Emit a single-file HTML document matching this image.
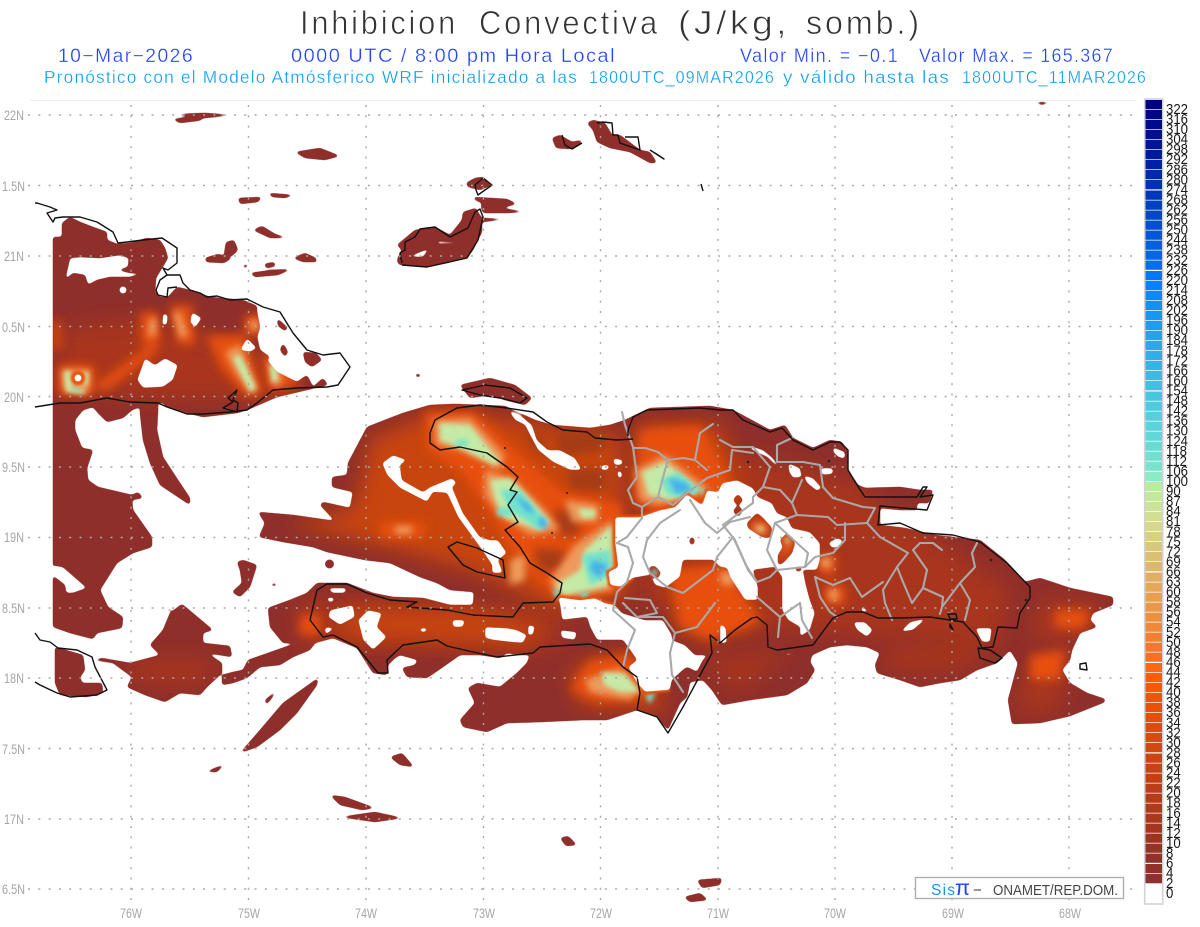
<!DOCTYPE html>
<html lang="es">
<head>
<meta charset="utf-8">
<title>Inhibicion Convectiva</title>
<style>
html,body{margin:0;padding:0;background:#fff;width:1200px;height:927px;overflow:hidden}
svg{display:block}
text{font-family:"Liberation Sans",sans-serif}
</style>
</head>
<body>
<svg width="1200" height="927" viewBox="0 0 1200 927" xmlns="http://www.w3.org/2000/svg">
<defs>
<filter id="goo" filterUnits="userSpaceOnUse" x="0" y="0" width="1200" height="927">
<feGaussianBlur stdDeviation="1.5"/>
<feComponentTransfer><feFuncA type="linear" slope="6" intercept="-2.1"/></feComponentTransfer>
</filter>
<mask id="land" maskUnits="userSpaceOnUse" x="0" y="0" width="1200" height="927"><g filter="url(#goo)"><path fill="#fff" fill-rule="evenodd" d="
M53,237L62,237 62,223 70,217 80,222 93,227 107,232 107,240 117,244 130,243 147,238 160,240 165,248 168,258 162,268 156,278 155,292 160,297 168,297 177,287 190,290 210,297 243,300 257,306 257,312 260,327 257,337 260,350 270,357 267,360 277,372 297,382 307,375 313,387 323,378 328,385 277,397 247,410 237,413 203,417 187,413 167,407 163,403 158,403 158,410 157,430 163,457 178,480 190,498 190,505 160,485 150,463 143,440 140,413 140,407 132,410 123,418 107,422 98,413 93,407 83,410 75,420 75,430 82,448 93,450 87,468 88,480 98,487 132,495 138,492 143,498 132,500 133,510 152,537 152,547 133,553 117,563 100,590 108,607 123,617 122,628 97,633 93,639 70,633 53,627Z
M52,565L63,567 87,588 73,593 66,593 65,585 52,575Z
M65,280L70,258 80,257 100,258 120,255 129,258 128,267 118,270 130,273 145,273 130,277 110,277 97,280 88,285 85,275 73,273Z
M119,290a4,4 0 1,0 8,0a4,4 0 1,0 -8,0Z
M163,313L168,315 167,325 162,325Z
M192,312L202,318 195,328 190,322Z
M137,380L145,358 155,365 165,358 178,365 173,380 163,387 143,388Z
M240,350L247,338 257,348 250,352Z
M74,378a4,4 0 1,0 8,0a4,4 0 1,0 -8,0Z
M56,249L67,249 67,251 56,251Z
M277,318L288,328 285,331 278,326Z
M283,343L288,352 285,357 280,350Z
M303,352L316,353 322,360 312,367 305,362Z
M55,647L83,655 85,670 80,677 82,683 102,683 103,693 87,697 60,695 55,683Z
M182,604L213,630 203,633 203,643 230,646 232,657 207,653 222,663 222,673 207,687 200,695 180,693 165,702 145,695 127,687 132,677 113,663 93,660 102,658 130,663 160,655 150,645 163,630 170,613Z
M237,562L243,560 257,565 250,587 240,597 232,592 242,583 240,570Z
M165,611L172,607 170,611Z
M271,584L276,583 277,586 271,586Z
M225,632L227,631 226,636 224,635Z
M325,564a4.5,4.5 0 1,0 9,0a4.5,4.5 0 1,0 -9,0Z
M238,198L262,197 258,202 240,204Z
M268,193L295,195 285,198 272,197Z
M253,230L262,226 275,234 288,238 270,238Z
M224,255L226,242 234,240 238,250 232,256Z
M205,258L218,254 232,258 224,263 206,262Z
M243,265L250,264 244,269Z
M264,264L274,262 276,266 266,268Z
M293,258L305,253 316,258 317,262 303,262Z
M250,273L272,270 292,269 278,275 255,277Z
M170,114L205,113 235,115 205,118Z
M172,119L195,117 205,120 180,123Z
M295,152L320,148 340,156 325,160 305,158Z
M587,123L593,120 605,123 612,135 620,135 640,150 650,152 657,163 650,163 630,152 610,148 597,142 593,130Z
M552,138L560,135 572,142 582,140 580,145 570,149 556,148Z
M466,183L475,178 483,177 492,185 480,190 468,187Z
M473,197L507,199 517,204 500,208 528,212 507,213 483,213 481,207 482,203 475,200Z
M397,245L403,240 415,230 435,227 450,235 462,220 463,212 476,208 479,214 482,218 510,219 482,222 482,232 473,250 467,258 447,263 427,267 400,265 397,262 398,257 402,250Z
M437,241L458,242 456,244 437,244Z
M405,258L430,248 423,257 407,257Z
M1033,102L1052,102 1042,105Z
M460,385L490,378 515,385 532,398 525,405 505,400 490,395 470,398Z
M258,512L293,515 335,521 320,505 323,502 350,508 353,492 332,487 332,477 347,475 348,463 367,427 403,413 430,405 455,404 505,406 535,420 552,425 590,428 610,425 625,420 650,408 710,406 733,410 770,430 785,425 793,438 813,448 830,440 842,442 848,452 848,470 858,485 865,488 900,487 920,490 933,490 930,500 925,510 900,510 880,508 880,525 905,528 935,535 980,540 1005,560 1025,582 1040,578 1070,588 1113,597 1113,605 1093,613 1090,620 1097,627 1080,633 1072,650 1070,660 1062,670 1070,683 1087,693 1105,699 1105,702 1070,716 1040,723 1012,724 1008,700 1018,663 1010,650 997,663 977,670 960,680 940,683 920,687 900,680 877,673 875,665 880,653 867,647 847,645 830,647 812,655 810,662 815,670 807,683 787,695 750,700 722,705 712,690 703,680 690,682 687,697 680,703 668,730 657,717 637,710 607,720 583,720 540,722 507,723 487,732 463,727 460,720 475,703 468,688 477,683 500,687 517,673 527,663 530,655 520,655 507,653 500,658 480,655 460,655 443,667 427,678 407,677 402,668 415,665 418,660 400,655 395,658 388,665 387,675 373,673 357,648 333,638 315,643 310,650 293,657 280,665 260,667 247,678 233,683 222,685 222,675 233,672 243,670 248,660 285,647 298,643 283,643 270,627 268,608 290,600 307,593 317,583 347,583 373,593 393,597 423,598 450,605 473,605 474,592 450,590 437,583 420,577 390,563 365,560 327,552 313,547 283,542 259,537 265,523Z
M382,463L393,455 407,460 400,465 402,480 423,492 430,487 452,478 457,483 452,487 463,513 480,537 490,540 498,540 507,553 498,560 503,573 492,573 492,565 482,550 458,517 447,493 433,492 427,502 400,488 387,475Z
M508,410L520,415 532,425 537,440 548,450 560,450 575,458 582,470 570,470 553,462 538,450 530,435 525,425 515,420Z
M602,465L610,465 608,470 600,470Z
M613,458L623,460 622,465 614,465Z
M617,470L622,472 622,478 618,478Z
M615,517L640,517 660,510 675,507 687,494 702,505 707,490 718,492 722,483 737,480 753,488 758,497 772,503 777,513 787,517 792,528 810,532 820,543 820,560 817,570 803,570 806,585 810,600 815,613 810,630 800,637 800,627 788,620 782,610 782,577 775,567 753,570 758,587 758,600 745,600 730,577 727,568 720,567 713,560 683,560 680,577 665,588 655,585 650,575 633,578 620,587 610,585 608,572 618,567 615,543Z
M747,523L757,513 763,518 772,528 770,538 762,537 748,528Z
M780,540L787,533 795,543 792,553 783,563 778,565 778,555 783,547Z
M738,494L743,500 738,506 733,500Z
M738,505L743,511 738,517 733,511Z
M692,536L695,541 692,546 689,541Z
M649,567L655,566 661,573 657,579 651,576Z
M795,568L800,566 802,570 797,572Z
M558,597L560,605 562,620 587,617 590,627 597,640 607,640 623,640 637,660 628,667 637,683 645,692 670,690 672,680 683,670 687,667 697,672 703,660 708,655 695,655 685,645 672,640 672,635 663,620 645,620 622,613 615,605 605,603 595,598 580,600Z
M560,630L577,632 575,640 562,638Z
M328,588L347,588 345,593 332,593Z
M327,597L335,598 333,602 328,602Z
M330,610L353,605 355,617 340,625 328,617Z
M325,627L335,628 325,635Z
M358,620L368,610 382,613 377,627 387,637 373,650 363,640Z
M452,620L465,620 463,627 453,627Z
M420,628L428,628 426,632 420,632Z
M485,627L507,628 517,630 527,635 523,643 510,642 493,640 485,638Z
M528,625L535,626 533,635 528,635Z
M748,445L763,450 772,457 780,467 775,465 767,457 752,450Z
M788,463L800,468 802,477 793,478 789,472Z
M803,475L813,478 822,488 817,491 807,483Z
M820,468L833,468 833,474 822,475Z
M833,447L845,452 845,459 838,457 833,452Z
M828,543L837,538 843,540 840,547 832,548Z
M860,605L870,612 862,612Z
M853,622L865,622 873,630 867,637 857,630Z
M900,632L910,622 927,618 913,630Z
M975,628L992,628 990,642 982,642Z
M1020,620L1025,625 1022,626Z
M932,610L960,612 950,614Z
M917,503L928,503 925,510 917,510Z
M782,654L807,650 787,656Z
M720,623L726,628 727,643 720,643Z
M265,700L277,690 272,698 266,705Z
M240,753L260,730 283,703 318,678 317,685 297,713 280,730 257,747Z
M390,757L402,753 414,767 400,765Z
M205,772L225,764 217,772Z
M330,795L345,797 375,808 362,810 340,805Z
M340,817L375,812 403,818 375,822Z
M560,838L568,836 577,845 566,846Z
M684,897L700,893 708,900 690,902Z
M697,880L722,878 720,885 702,888Z
M414,374L422,374 418,378Z
"/></g></mask>
<filter id="b10" x="-20%" y="-20%" width="140%" height="140%"><feGaussianBlur stdDeviation="10"/></filter>
<filter id="b6" x="-20%" y="-20%" width="140%" height="140%"><feGaussianBlur stdDeviation="5"/></filter>
<filter id="b4" x="-30%" y="-30%" width="160%" height="160%"><feGaussianBlur stdDeviation="3.5"/></filter>
<filter id="b3" x="-40%" y="-40%" width="180%" height="180%"><feGaussianBlur stdDeviation="2.4"/></filter>
<filter id="b1" x="-10%" y="-10%" width="120%" height="120%"><feGaussianBlur stdDeviation="1"/></filter>
</defs>

<g mask="url(#land)">
<rect x="0" y="100" width="1130" height="810" fill="#8f2f2b"/>
<g filter="url(#b10)" fill="#a8361a">
<path d="M60,330L130,320 300,370 290,400 180,400 60,390Z"/>
<path d="M640,430L850,480 1010,590 1000,640 780,630 640,600Z"/>
<path d="M880,650L1000,640 960,670 890,670ZM700,660L790,650 740,690Z"/>
<path d="M1040,600L1100,600 1090,640 1030,640ZM1020,680L1070,650 1060,710 1020,715Z"/>
<path d="M130,660L220,660 200,685 130,680Z"/>
<path d="M300,600L560,610 560,650 300,645Z"/>
</g>
<g filter="url(#b10)" fill="#c8440e">
<path d="M370,440L440,410 620,435 625,600 560,610 470,570 400,550 320,530 290,525 350,510 360,490Z"/>
<path d="M640,425L720,425 740,490 650,515 635,500Z"/>
<path d="M670,575L730,570 760,625 700,640 675,625Z"/>
<path d="M570,670L640,650 665,710 580,705Z"/>
<path d="M350,610L470,610 540,625 530,645 430,640 340,635Z"/>
</g>
<g filter="url(#b6)" fill="#e8500a">
<path d="M140,312L158,312 160,345 142,345ZM170,305L192,305 196,345 178,345Z"/>
<path d="M205,335L245,335 262,395 245,395 222,370Z"/>
<path d="M262,352L285,360 300,385 270,390Z"/>
<path d="M245,315L262,315 262,335 245,335Z"/>
<path d="M95,385L150,345 160,350 105,392Z"/>
<path d="M58,365L94,365 94,395 58,395ZM54,320L60,320 60,350 54,350Z"/>
<path d="M425,412L475,412 520,455 560,490 622,505 622,590 560,600 520,565 495,520 460,470 428,450Z"/>
<path d="M640,430L700,425 730,482 738,497 655,512 635,500Z"/>
<path d="M670,570L720,565 745,600 758,622 710,640 680,625Z"/>
<path d="M300,615L320,615 320,635 300,635Z"/>
<path d="M590,660L630,655 650,695 600,702 570,690Z"/>
<path d="M750,520L770,520 770,535 752,535ZM782,535L795,545 785,560 778,560Z"/>
<path d="M380,522L425,522 425,538 380,538Z"/>
<path d="M820,555L835,555 835,575 820,575ZM825,585L845,585 845,605 825,605Z"/>
<path d="M1055,610L1090,610 1085,628 1055,628ZM1030,655L1065,650 1060,680 1030,680Z"/>
<path d="M725,565L745,600 760,620 740,625 720,590Z"/>
<path d="M560,550L590,550 590,570 560,570Z"/>
</g>
<g filter="url(#b6)" fill="#a53a16">
<path d="M553,433L607,433 607,450 560,457Z"/>
<path d="M565,470L607,468 607,490 572,490Z"/>
<path d="M553,510L578,510 580,535 560,537Z"/>
<path d="M533,548L565,550 565,570 540,572Z"/>
<path d="M520,425L545,440 545,460 530,445Z"/>
</g>
<g filter="url(#b4)" fill="#ee9a5c">
<path d="M150,318L156,318 156,336 148,336ZM173,312L180,312 188,336 180,338Z"/>
<path d="M225,352L240,345 258,390 250,392 235,372Z"/>
<path d="M268,362L278,362 282,385 272,385Z"/>
<path d="M250,320L258,320 258,330 250,330Z"/>
<path d="M62,370L90,370 88,392 64,390Z"/>
<path d="M395,526L412,526 412,534 395,534Z"/>
<path d="M434,420L470,418 505,455 500,470 460,450 436,445Z"/>
<path d="M485,470L515,480 545,510 560,530 530,535 500,515 485,495Z"/>
<path d="M565,500L598,505 598,522 572,522Z"/>
<path d="M575,545L612,520 612,590 560,598 550,580Z"/>
<path d="M635,470L665,455 710,490 660,505 640,500Z"/>
<path d="M585,680L620,668 640,690 630,700 590,692Z"/>
<path d="M752,525L764,525 766,534 756,532ZM783,535L792,540 788,548ZM820,558L832,558 830,568 822,568ZM828,590L838,590 838,600 830,600Z"/>
<path d="M720,572L732,572 735,585 722,585Z"/>
<path d="M510,560L525,555 525,580 510,585Z"/>
</g>
<g filter="url(#b3)" fill="#c4eaa6">
<path d="M233,358L240,355 256,388 250,392ZM270,365L276,365 278,380 272,382Z"/>
<path d="M64,372L70,370 72,388 86,390 84,394 66,392ZM84,372L88,372 88,385 84,385Z"/>
<path d="M440,423L470,425 500,462 495,465 460,448 440,440Z"/>
<path d="M490,480L510,478 535,505 550,522 540,530 505,518 495,500Z"/>
<path d="M578,508L596,510 594,518 582,518Z"/>
<path d="M585,550L612,525 612,585 565,595 555,585 580,570Z"/>
<path d="M642,472L665,462 700,490 670,500 648,495Z"/>
<path d="M602,672L625,674 640,692 620,692 604,685Z"/>
<path d="M757,527L763,527 762,532ZM786,537L790,540 786,543Z"/>
</g>
<g filter="url(#b3)" fill="#72e2cc">
<path d="M456,440L468,440 468,446 456,446Z"/>
<path d="M500,490L520,490 545,520 540,530 510,510ZM497,508L512,508 512,516 497,516Z"/>
<path d="M582,555L610,550 612,575 590,585Z"/>
<path d="M660,480L678,472 700,490 690,498 668,495ZM700,488L716,492 705,498Z"/>
<path d="M552,590L560,590 558,600ZM578,592L590,592 585,600Z"/>
<path d="M72,389L78,387 78,392Z"/>
<path d="M651,570L657,570 657,576 652,575ZM645,695L656,692 650,704Z"/>
</g>
<g filter="url(#b3)" fill="#46b2ea">
<path d="M515,495L530,505 535,515 525,510ZM540,515L548,522 545,530 538,525Z"/>
<path d="M592,560L608,565 600,578 590,570Z"/>
<path d="M668,478L685,482 692,490 676,494Z"/>
</g>
<g filter="url(#b1)" fill="none" stroke="#e8500c" stroke-width="4">
<path d="M633,578L620,587 610,585 608,572 618,567 615,543 615,517 640,517 660,510 675,507 687,494 702,505 707,490 718,492 722,483 737,490"/>
<path d="M558,597L580,600 595,598 605,603 615,605"/>
<circle cx="78" cy="378" r="5"/>
<path d="M645,692L670,690"/>
</g>
</g>

<!-- province lines -->
<g fill="none" stroke="#a9a9a9" stroke-width="2.1" stroke-linejoin="round" stroke-linecap="round">
<path d="M622,412L625,425 633,447 637,477 628,490 633,503 642,507 642,518 627,537 617,543 628,547 633,563 627,582 617,592 613,610 635,630 627,650 623,667"/>
<path d="M633,448L645,448 658,452 668,460 683,458 695,460 700,433 713,424M668,460L665,470 658,497 642,507M658,497L673,505 687,493 707,478 730,470 732,450 753,453M695,460L707,470M690,500L705,523 717,533 730,522 750,517"/>
<path d="M680,510L660,523 647,540 643,557 650,573 667,587 683,593 713,570 717,557 733,537 747,567 757,582"/>
<path d="M623,603L637,617 657,613 650,600 625,598M637,617L663,617 675,633 697,627 715,603M675,633L670,653 672,675 683,692"/>
<path d="M720,440L733,447 753,447 770,467 763,487 780,490 792,503 797,515 828,517 837,525 867,523 875,508 863,507 833,498 823,487 820,465 803,462 777,462 777,445 792,438"/>
<path d="M802,480L792,503M763,487L753,497 753,503 723,525 735,540 748,570 757,582 770,577 777,570 767,550 775,523 797,515M775,523L808,553 805,567 777,570"/>
<path d="M845,523L845,540 833,553 815,557 805,567M867,523L880,537 908,553 897,567 883,590 885,603 892,620"/>
<path d="M815,577L833,585 850,578 862,597 883,582M897,567L903,582 912,603 923,588 927,570 913,550 920,543 933,543 942,550"/>
<path d="M977,543L972,553 975,567 960,583 942,607 940,614M960,583L970,600 965,620M923,588L943,597 942,607"/>
<path d="M815,577L820,597 830,612 837,617M757,597L780,617 778,637M780,617L800,603 802,620 812,638"/>
</g>

<!-- coast lines -->
<g fill="none" stroke="#111" stroke-width="1.4" stroke-linejoin="round">
<path d="M430,433L435,420 457,408 480,405 507,408 533,412 547,422 563,430 587,432 595,438 617,440 633,439M628,436L628,430 633,417 647,410 700,408 720,410 733,410 743,420 770,432 782,428 793,440 813,450 830,442 840,442 848,450 848,470 857,485 865,497 917,497 923,487 927,487 920,497 933,495 927,510 880,506 878,525 900,523 923,533 953,535 980,542 1007,563 1030,587 1030,598 1020,613 1017,628 998,627 993,647 982,648 977,637 963,622 930,617 900,618 878,618 863,612 847,612 833,618 813,645 777,650 768,647 767,625 757,617 752,618 735,630 720,643 710,635 712,653 683,707 668,733 657,717 637,710 640,693 637,677 623,667 607,650 590,644 540,647 533,653 497,657 473,652 447,646 437,640 403,645 387,660 388,673 378,673 357,647 333,635 323,637 310,620 317,590 327,584 347,584 367,593 390,600 417,602 407,607 447,610 473,615 513,617 523,603 553,602 560,593 562,583 547,573 530,563 520,547 505,530 518,522 508,505 517,492 510,490 518,477 507,467 487,453 460,447 440,450 430,443 430,433"/>
<path d="M448,547L457,542 477,548 503,560 505,578 477,572 463,565Z"/>
<path d="M462,390L485,385 510,388 527,398 520,403 500,398 480,395Z"/>
<path d="M978,648L990,650 1002,658 995,663 980,658Z"/>
<path d="M1080,664L1086,663 1087,670 1080,669Z"/>
<path d="M948,614L956,614 957,619 950,619ZM950,624L953,630 950,627Z"/>
<path d="M35,203L37,203 50,207 57,210 47,213 53,222 55,218 63,217 80,217 97,222 113,232 118,243 127,242 143,240 162,238 177,248 177,263 168,270 163,268 167,275 180,275 183,283 190,290 200,293 207,297 217,296 230,300 247,299 263,307 280,312 293,333 307,350 323,355 340,353 350,367 338,385 327,387 297,388 273,390 257,403 247,410 230,412 203,414 187,414 167,407 158,403 130,402 107,398 80,403 60,403 35,407"/>
<path d="M167,275L160,280 156,290 158,295 167,297 168,288 177,287"/>
<path d="M237,390L228,398 233,402 223,408 237,412 238,403 233,400Z"/>
<path d="M35,633L40,640 50,642 58,648 77,650 92,657 95,667 107,690 97,695 70,697 57,693 40,685 35,682"/>
<path d="M475,185L483,178 492,185 478,195 476,190Z"/>
<path d="M402,263L400,253 405,250 405,242 415,237 420,229 435,227 450,237 468,228 475,212 480,209 483,217 478,240 467,258 427,267 402,265"/>
<path d="M597,123L603,122 612,123 613,135 618,135 620,143 640,150 638,137 625,137"/>
<path d="M650,150L664,159 655,153"/>
<path d="M562,135L565,145 572,149 582,143"/>
<path d="M701,184L703,191"/>
</g>
<g fill="#222">
<circle cx="829" cy="461" r="1.3"/><circle cx="748" cy="462" r="1.3"/><circle cx="1026" cy="600" r="1.3"/><circle cx="991" cy="560" r="1.3"/><circle cx="505" cy="448" r="1"/><circle cx="567" cy="493" r="1"/><circle cx="552" cy="533" r="1"/>
</g>

<!-- grid -->
<g fill="none" stroke="#a8a8a8" stroke-width="1.4" stroke-dasharray="2 8.3">
<path d="M28,115H1136M28,185.5H1136M28,256H1136M28,326.5H1136M28,396.5H1136M28,467H1136M28,537.5H1136M28,608H1136M28,678H1136M28,748.5H1136M28,819H1136M28,889H1136"/>
<path d="M131,105V905M248.5,105V905M366,105V905M483.5,105V905M600.5,105V905M718,105V905M835,105V905M952,105V905M1069,105V905"/>
</g>
<path d="M30,100.5H1136" stroke="#eee" stroke-width="1"/>

<!-- heading -->
<g font-size="33" fill="#333" stroke="#fff" stroke-width=".7" letter-spacing="3">
<text x="300" y="34" textLength="158" lengthAdjust="spacingAndGlyphs">Inhibicion</text>
<text x="479" y="34" textLength="181" lengthAdjust="spacingAndGlyphs">Convectiva</text>
<text x="678" y="34" textLength="112" lengthAdjust="spacingAndGlyphs">(J/kg,</text>
<text x="806" y="34" textLength="116" lengthAdjust="spacingAndGlyphs">somb.)</text>
</g>
<g font-size="19" fill="#2244ff" stroke="#fff" stroke-width=".3" letter-spacing="1.4">
<text x="58" y="62" textLength="136" lengthAdjust="spacingAndGlyphs">10−Mar−2026</text>
<text x="291" y="62" textLength="325" lengthAdjust="spacingAndGlyphs">0000 UTC / 8:00 pm Hora Local</text>
<text x="740" y="62" textLength="159" lengthAdjust="spacingAndGlyphs">Valor Min. = −0.1</text>
<text x="919" y="62" textLength="195" lengthAdjust="spacingAndGlyphs">Valor Max. = 165.367</text>
</g>
<g font-size="17.5" fill="#0a9dff" stroke="#fff" stroke-width=".3" letter-spacing="1.2">
<text x="44" y="83" textLength="534" lengthAdjust="spacingAndGlyphs">Pronóstico con el Modelo Atmósferico WRF inicializado a las</text>
<text x="589" y="83" textLength="186" lengthAdjust="spacingAndGlyphs">1800UTC_09MAR2026</text>
<text x="783" y="83" textLength="167" lengthAdjust="spacingAndGlyphs">y válido hasta las</text>
<text x="962" y="83" textLength="185" lengthAdjust="spacingAndGlyphs">1800UTC_11MAR2026</text>
</g>

<!-- axis labels -->
<g font-size="14" fill="#a6a6a6">
<text x="4" y="120" textLength="20" lengthAdjust="spacingAndGlyphs">22N</text>
<text x="2" y="191" textLength="23" lengthAdjust="spacingAndGlyphs">1.5N</text>
<text x="4" y="261" textLength="20" lengthAdjust="spacingAndGlyphs">21N</text>
<text x="2" y="332" textLength="23" lengthAdjust="spacingAndGlyphs">0.5N</text>
<text x="4" y="402" textLength="20" lengthAdjust="spacingAndGlyphs">20N</text>
<text x="2" y="472" textLength="23" lengthAdjust="spacingAndGlyphs">9.5N</text>
<text x="4" y="542" textLength="20" lengthAdjust="spacingAndGlyphs">19N</text>
<text x="2" y="613" textLength="23" lengthAdjust="spacingAndGlyphs">8.5N</text>
<text x="4" y="683" textLength="20" lengthAdjust="spacingAndGlyphs">18N</text>
<text x="2" y="754" textLength="23" lengthAdjust="spacingAndGlyphs">7.5N</text>
<text x="4" y="824" textLength="20" lengthAdjust="spacingAndGlyphs">17N</text>
<text x="2" y="894" textLength="23" lengthAdjust="spacingAndGlyphs">6.5N</text>
<text x="120" y="918" textLength="22" lengthAdjust="spacingAndGlyphs">76W</text>
<text x="238" y="918" textLength="22" lengthAdjust="spacingAndGlyphs">75W</text>
<text x="355" y="918" textLength="22" lengthAdjust="spacingAndGlyphs">74W</text>
<text x="473" y="918" textLength="22" lengthAdjust="spacingAndGlyphs">73W</text>
<text x="590" y="918" textLength="22" lengthAdjust="spacingAndGlyphs">72W</text>
<text x="707" y="918" textLength="22" lengthAdjust="spacingAndGlyphs">71W</text>
<text x="824" y="918" textLength="22" lengthAdjust="spacingAndGlyphs">70W</text>
<text x="942" y="918" textLength="22" lengthAdjust="spacingAndGlyphs">69W</text>
<text x="1059" y="918" textLength="22" lengthAdjust="spacingAndGlyphs">68W</text>
</g>

<!-- credit box -->
<rect x="915.5" y="877.5" width="208" height="21" fill="#fff" stroke="#b0b0b0" stroke-width="1.4"/>
<text x="931" y="895" font-size="15.5" fill="#1a90ff" textLength="24" lengthAdjust="spacing">Sis</text>
<text x="955" y="895" font-size="21" fill="#2244ff" textLength="15" lengthAdjust="spacingAndGlyphs">π</text>
<text x="973" y="895" font-size="15" fill="#444">−</text>
<text x="993" y="895" font-size="15" fill="#444" textLength="125" lengthAdjust="spacingAndGlyphs">ONAMET/REP.DOM.</text>

<!-- colour bar -->
<rect x="1144.7" y="99" width="18" height="805" fill="#fff" stroke="#d2d2d6" stroke-width="1.6"/>
<g>
<rect x="1145.5" y="100" width="16.5" height="9.3" fill="#00007f"/>
<rect x="1145.5" y="110" width="16.5" height="9.3" fill="#000585"/>
<rect x="1145.5" y="120" width="16.5" height="9.3" fill="#000a8c"/>
<rect x="1145.5" y="130" width="16.5" height="9.3" fill="#001090"/>
<rect x="1145.5" y="140" width="16.5" height="9.3" fill="#001598"/>
<rect x="1145.5" y="150" width="16.5" height="9.3" fill="#001a9f"/>
<rect x="1145.5" y="160" width="16.5" height="9.3" fill="#0020a6"/>
<rect x="1145.5" y="170" width="16.5" height="9.3" fill="#0028ad"/>
<rect x="1145.5" y="180" width="16.5" height="9.3" fill="#0030b4"/>
<rect x="1145.5" y="190.5" width="16.5" height="9.3" fill="#0038bb"/>
<rect x="1145.5" y="200.5" width="16.5" height="9.3" fill="#0040c2"/>
<rect x="1145.5" y="210.5" width="16.5" height="9.3" fill="#0048c9"/>
<rect x="1145.5" y="220.5" width="16.5" height="9.3" fill="#0050d0"/>
<rect x="1145.5" y="230.5" width="16.5" height="9.3" fill="#0058d8"/>
<rect x="1145.5" y="240.5" width="16.5" height="9.3" fill="#0060e0"/>
<rect x="1145.5" y="250.5" width="16.5" height="9.3" fill="#0068e8"/>
<rect x="1145.5" y="260.5" width="16.5" height="9.3" fill="#0070f0"/>
<rect x="1145.5" y="271" width="16.5" height="9.3" fill="#0078f8"/>
<rect x="1145.5" y="281" width="16.5" height="9.3" fill="#0680ff"/>
<rect x="1145.5" y="291" width="16.5" height="9.3" fill="#0c88f8"/>
<rect x="1145.5" y="301" width="16.5" height="9.3" fill="#1290f4"/>
<rect x="1145.5" y="311" width="16.5" height="9.3" fill="#1896f0"/>
<rect x="1145.5" y="321" width="16.5" height="9.3" fill="#1e9cee"/>
<rect x="1145.5" y="331" width="16.5" height="9.3" fill="#24a2ec"/>
<rect x="1145.5" y="341" width="16.5" height="9.3" fill="#2aa8ea"/>
<rect x="1145.5" y="351" width="16.5" height="9.3" fill="#30aee8"/>
<rect x="1145.5" y="361" width="16.5" height="9.3" fill="#36b4e6"/>
<rect x="1145.5" y="371" width="16.5" height="9.3" fill="#3cbae4"/>
<rect x="1145.5" y="381" width="16.5" height="9.3" fill="#42c0e2"/>
<rect x="1145.5" y="391.5" width="16.5" height="9.3" fill="#48c6e0"/>
<rect x="1145.5" y="401.5" width="16.5" height="9.3" fill="#4eccde"/>
<rect x="1145.5" y="411.5" width="16.5" height="9.3" fill="#54d0dc"/>
<rect x="1145.5" y="421.5" width="16.5" height="9.3" fill="#5ad4da"/>
<rect x="1145.5" y="431.5" width="16.5" height="9.3" fill="#60d8d8"/>
<rect x="1145.5" y="441.5" width="16.5" height="9.3" fill="#68dcd4"/>
<rect x="1145.5" y="451.5" width="16.5" height="9.3" fill="#70e0d0"/>
<rect x="1145.5" y="461.5" width="16.5" height="9.3" fill="#78e4cc"/>
<rect x="1145.5" y="472" width="16.5" height="9.3" fill="#88ecc4"/>
<rect x="1145.5" y="482" width="16.5" height="9.3" fill="#b8eca0"/>
<rect x="1145.5" y="492" width="16.5" height="9.3" fill="#c4e8a0"/>
<rect x="1145.5" y="502" width="16.5" height="9.3" fill="#cce49a"/>
<rect x="1145.5" y="512" width="16.5" height="9.3" fill="#d2de92"/>
<rect x="1145.5" y="522" width="16.5" height="9.3" fill="#d6d88a"/>
<rect x="1145.5" y="532" width="16.5" height="9.3" fill="#d8d082"/>
<rect x="1145.5" y="542" width="16.5" height="9.3" fill="#dac87a"/>
<rect x="1145.5" y="552" width="16.5" height="9.3" fill="#dcc072"/>
<rect x="1145.5" y="562" width="16.5" height="9.3" fill="#deb86a"/>
<rect x="1145.5" y="572.5" width="16.5" height="9.3" fill="#e0b062"/>
<rect x="1145.5" y="582.5" width="16.5" height="9.3" fill="#e4a858"/>
<rect x="1145.5" y="592.5" width="16.5" height="9.3" fill="#e6a050"/>
<rect x="1145.5" y="602.5" width="16.5" height="9.3" fill="#e89848"/>
<rect x="1145.5" y="612.5" width="16.5" height="9.3" fill="#ec9040"/>
<rect x="1145.5" y="622.5" width="16.5" height="9.3" fill="#f08838"/>
<rect x="1145.5" y="632.5" width="16.5" height="9.3" fill="#f28030"/>
<rect x="1145.5" y="642.5" width="16.5" height="9.3" fill="#f47828"/>
<rect x="1145.5" y="652.5" width="16.5" height="9.3" fill="#f87020"/>
<rect x="1145.5" y="663" width="16.5" height="9.3" fill="#fa6814"/>
<rect x="1145.5" y="673" width="16.5" height="9.3" fill="#fc5e06"/>
<rect x="1145.5" y="683" width="16.5" height="9.3" fill="#f85800"/>
<rect x="1145.5" y="693" width="16.5" height="9.3" fill="#f05406"/>
<rect x="1145.5" y="703" width="16.5" height="9.3" fill="#e85208"/>
<rect x="1145.5" y="713" width="16.5" height="9.3" fill="#e24f0a"/>
<rect x="1145.5" y="723" width="16.5" height="9.3" fill="#dc4c0c"/>
<rect x="1145.5" y="733" width="16.5" height="9.3" fill="#d84a0e"/>
<rect x="1145.5" y="743" width="16.5" height="9.3" fill="#d2480f"/>
<rect x="1145.5" y="753.5" width="16.5" height="9.3" fill="#cc4510"/>
<rect x="1145.5" y="763.5" width="16.5" height="9.3" fill="#c84212"/>
<rect x="1145.5" y="773.5" width="16.5" height="9.3" fill="#c24014"/>
<rect x="1145.5" y="783.5" width="16.5" height="9.3" fill="#bc3e16"/>
<rect x="1145.5" y="793.5" width="16.5" height="9.3" fill="#b63c18"/>
<rect x="1145.5" y="803.5" width="16.5" height="9.3" fill="#b03a1a"/>
<rect x="1145.5" y="813.5" width="16.5" height="9.3" fill="#aa381c"/>
<rect x="1145.5" y="823.5" width="16.5" height="9.3" fill="#a4361e"/>
<rect x="1145.5" y="833.5" width="16.5" height="9.3" fill="#9e3420"/>
<rect x="1145.5" y="843.5" width="16.5" height="9.3" fill="#983226"/>
<rect x="1145.5" y="853.5" width="16.5" height="9.3" fill="#94302a"/>
<rect x="1145.5" y="864" width="16.5" height="9.3" fill="#92302c"/>
<rect x="1145.5" y="874" width="16.5" height="9.3" fill="#8f3030"/>
</g>
<g font-size="15" fill="#1a1a1a" transform="translate(1166,-0.7) scale(.88,1)">
<text y="114.5">322</text><text y="124.5">316</text><text y="134.5">310</text><text y="144.5">304</text><text y="154.5">298</text><text y="164.5">292</text><text y="175">286</text><text y="185">280</text><text y="195">274</text><text y="205">268</text><text y="215">262</text><text y="225">256</text><text y="235">250</text><text y="245">244</text><text y="255">238</text><text y="265.5">232</text><text y="275.5">226</text><text y="285.5">220</text><text y="295.5">214</text><text y="305.5">208</text><text y="315.5">202</text><text y="325.5">196</text><text y="335.5">190</text><text y="345.5">184</text><text y="356">178</text><text y="366">172</text><text y="376">166</text><text y="386">160</text><text y="396">154</text><text y="406">148</text><text y="416">142</text><text y="426">136</text><text y="436">130</text><text y="446.5">124</text><text y="456.5">118</text><text y="466.5">112</text><text y="476.5">106</text><text y="486.5">100</text><text y="496.5">90</text><text y="506.5">87</text><text y="516.5">84</text><text y="526.5">81</text><text y="537">78</text><text y="547">75</text><text y="557">72</text><text y="567">69</text><text y="577">66</text><text y="587">63</text><text y="597">60</text><text y="607">58</text><text y="617">56</text><text y="627">54</text><text y="637.5">52</text><text y="647.5">50</text><text y="657.5">48</text><text y="667.5">46</text><text y="677.5">44</text><text y="687.5">42</text><text y="697.5">40</text><text y="707.5">38</text><text y="717.5">36</text><text y="728">34</text><text y="738">32</text><text y="748">30</text><text y="758">28</text><text y="768">26</text><text y="778">24</text><text y="788">22</text><text y="798">20</text><text y="808">18</text><text y="818.5">16</text><text y="828.5">14</text><text y="838.5">12</text><text y="848.5">10</text><text y="858.5">8</text><text y="868.5">6</text><text y="878.5">4</text><text y="888.5">2</text><text y="898.5">0</text>
</g>
</svg>
</body>
</html>
